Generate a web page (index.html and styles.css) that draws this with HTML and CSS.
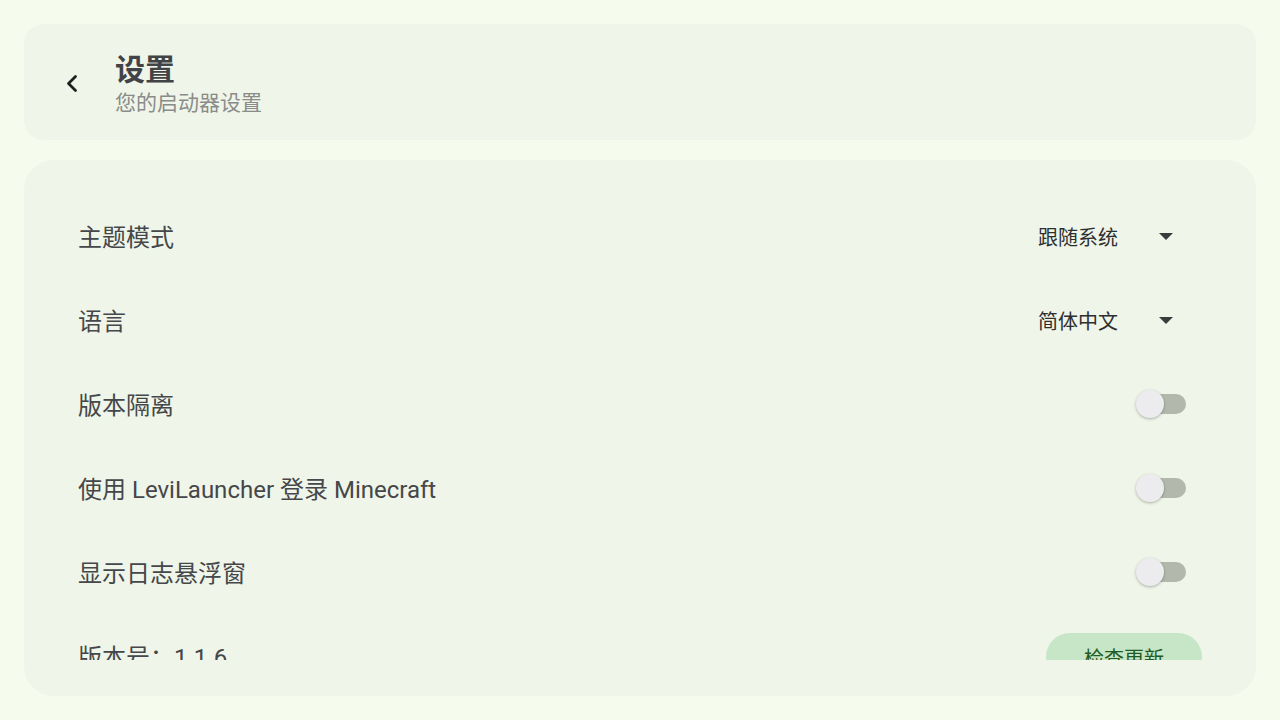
FILE: index.html
```html
<!DOCTYPE html>
<html lang="zh-CN">
<head>
<meta charset="utf-8">
<title>设置</title>
<link rel="stylesheet" href="styles.css">
</head>
<body>
<div class="page">
  <header class="header-card">
    <button class="back-btn" aria-label="返回">
      <svg width="24" height="24" viewBox="0 0 24 24"><path d="M15.5 5.5 L8.5 12.5 L15.5 19.5" fill="none" stroke="#1f1f1f" stroke-width="2.8" stroke-linecap="round" stroke-linejoin="round"/></svg>
    </button>
    <div class="header-text">
      <div class="title">设置</div>
      <div class="subtitle">您的启动器设置</div>
    </div>
  </header>
  <main class="settings-card">
    <div class="scroll">
      <div class="row">
        <span class="label">主题模式</span>
        <div class="dropdown"><span>跟随系统</span><span class="arrow"></span></div>
      </div>
      <div class="row">
        <span class="label">语言</span>
        <div class="dropdown"><span>简体中文</span><span class="arrow"></span></div>
      </div>
      <div class="row">
        <span class="label">版本隔离</span>
        <div class="switch"><span class="track"></span><span class="thumb"></span></div>
      </div>
      <div class="row">
        <span class="label">使用 LeviLauncher 登录 Minecraft</span>
        <div class="switch"><span class="track"></span><span class="thumb"></span></div>
      </div>
      <div class="row">
        <span class="label">显示日志悬浮窗</span>
        <div class="switch"><span class="track"></span><span class="thumb"></span></div>
      </div>
      <div class="row">
        <span class="label">版本号：1.1.6</span>
        <button class="update-btn">检查更新</button>
      </div>
    </div>
  </main>
</div>
</body>
</html>
```
FILE: styles.css
```css
* { box-sizing: border-box; }
html, body {
  margin: 0;
  height: 100%;
  background: #f5fcee;
  font-family: Roboto, "Noto Sans CJK SC", sans-serif;
}
.page {
  height: 720px;
  padding: 24px;
  display: flex;
  flex-direction: column;
  gap: 20px;
}
.header-card {
  height: 116px;
  background: #eff5e8;
  border-radius: 20px;
  display: flex;
  align-items: center;
  padding-left: 24px;
  gap: 19px;
}
.back-btn {
  width: 48px;
  height: 48px;
  border: none;
  background: transparent;
  padding: 0;
  display: flex;
  align-items: center;
  justify-content: center;
  margin-top: 2px;
}
.header-text {
  display: flex;
  flex-direction: column;
  margin-top: 4px;
}
.title {
  font-size: 30px;
  font-weight: 700;
  color: #424347;
  line-height: 36px;
}
.subtitle {
  font-size: 21px;
  color: #8a8c8a;
  line-height: 28px;
  margin-top: 1px;
}
.settings-card {
  flex: 1;
  background: #eff5e8;
  border-radius: 30px;
  padding: 33px 0 36px;
  display: flex;
  flex-direction: column;
  min-height: 0;
}
.scroll {
  flex: 1;
  overflow: hidden;
  padding: 0 54px 0 54px;
}
.row {
  height: 84px;
  display: flex;
  align-items: center;
  justify-content: space-between;
}
.label {
  font-size: 24px;
  color: #45474a;
}
.dropdown {
  width: 164px;
  display: flex;
  align-items: center;
  justify-content: space-between;
  padding-right: 24px;
  margin-top: 2px;
  font-size: 20px;
  color: #2d2f30;
}
.arrow {
  width: 24px;
  height: 24px;
  display: flex;
  align-items: center;
  justify-content: center;
}
.arrow::before {
  content: "";
  border-left: 7px solid transparent;
  border-right: 7px solid transparent;
  border-top: 7px solid #3a3b3d;
}
.switch {
  position: relative;
  width: 52px;
  height: 32px;
  margin-right: 16px;
  margin-top: 2px;
}
.track {
  position: absolute;
  right: 0;
  top: 6px;
  width: 44px;
  height: 20px;
  border-radius: 10px;
  background: #b2b8ac;
}
.thumb {
  position: absolute;
  left: 2px;
  top: 2px;
  width: 28px;
  height: 28px;
  border-radius: 50%;
  background: #ececee;
  box-shadow: 0 1px 3px rgba(0,0,0,0.28);
}
.update-btn {
  width: 156px;
  height: 48px;
  margin-top: 4px;
  border: none;
  border-radius: 24px;
  background: #c7e6c8;
  color: #1f5b22;
  font-family: Roboto, "Noto Sans CJK SC", sans-serif;
  font-size: 20px;
}
```
